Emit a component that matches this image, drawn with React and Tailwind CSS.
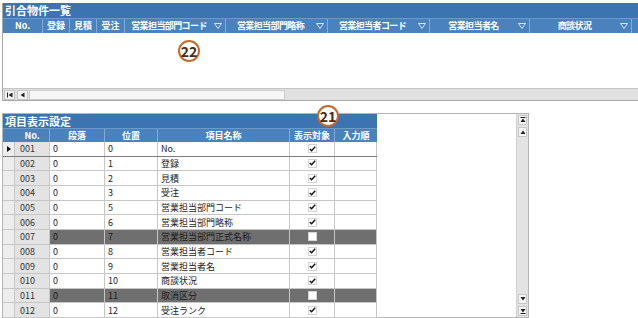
import React from "react";

const topCols = [
  { label: "No.", w: 40 },
  { label: "登録", w: 27 },
  { label: "見積", w: 27 },
  { label: "受注", w: 28 },
  { label: "営業担当部門コード", w: 101, filter: true },
  { label: "営業担当部門略称", w: 102, filter: true },
  { label: "営業担当者コード", w: 102, filter: true },
  { label: "営業担当者名", w: 100, filter: true },
  { label: "商談状況", w: 102, filter: true },
];

const rows = [
  ["001", "0", "0", "No.", true],
  ["002", "0", "1", "登録", true],
  ["003", "0", "2", "見積", true],
  ["004", "0", "3", "受注", true],
  ["005", "0", "5", "営業担当部門コード", true],
  ["006", "0", "6", "営業担当部門略称", true],
  ["007", "0", "7", "営業担当部門正式名称", false],
  ["008", "0", "8", "営業担当者コード", true],
  ["009", "0", "9", "営業担当者名", true],
  ["010", "0", "10", "商談状況", true],
  ["011", "0", "11", "取消区分", false],
  ["012", "0", "12", "受注ランク", true],
];

function FilterMark() {
  return (
    <svg width="8" height="6" viewBox="0 0 8 6" className="shrink-0">
      <path d="M0.5 0.5 H7.5 L4 5.5 Z" fill="none" stroke="#d8e4f1" strokeWidth="1" />
    </svg>
  );
}

function Check({ on }) {
  return (
    <div className="w-[9px] h-[9px] bg-white border border-[#d4d4d4] flex items-center justify-center">
      {on && (
        <svg width="7" height="6" viewBox="0 0 7 6">
          <path d="M0.8 3 L2.6 4.8 L6.2 0.8" fill="none" stroke="#111" strokeWidth="1.4" />
        </svg>
      )}
    </div>
  );
}

function Marker({ n, className }) {
  return (
    <div className={"absolute w-[22px] h-[22px] rounded-full border-2 border-[#c46a2c] bg-white flex items-center justify-center text-[14px] font-bold leading-none text-[#4a2a12] " + className}>
      {n}
    </div>
  );
}

function VBtn({ kind }) {
  return (
    <div className="h-[10px] mx-[1px] my-[1px] bg-[#f4f4f4] border border-[#c8c8c8] flex items-center justify-center">
      <svg width="6" height="6" viewBox="0 0 6 6">
        {kind === "first" && <><rect x="0.5" y="0" width="5" height="1" fill="#222" /><path d="M3 1.5 L5.5 5 H0.5 Z" fill="#222" /></>}
        {kind === "up" && <path d="M3 1.5 L5.5 5 H0.5 Z" fill="#222" />}
        {kind === "down" && <path d="M3 4.5 L5.5 1 H0.5 Z" fill="#222" />}
        {kind === "last" && <><path d="M3 4.5 L5.5 1 H0.5 Z" fill="#222" /><rect x="0.5" y="5" width="5" height="1" fill="#222" /></>}
      </svg>
    </div>
  );
}

export default function App() {
  return (
    <div className="relative w-[638px] h-[318px] bg-white overflow-hidden font-['Noto_Sans_CJK_JP','Liberation_Sans',sans-serif]">
      {/* 引合物件一覧 */}
      <div className="mt-[3px] ml-[2px] border-l border-b border-[#a8a8a8]">
        <div className="h-[15px] bg-[#3b74b0] text-white text-[11px] font-bold leading-[15px] pl-[2px]">引合物件一覧</div>
        <div className="h-[15px] bg-[#4a82bd] border-t border-[#6d9acb] flex">
          {topCols.map((c) => (
            <div key={c.label} style={{ width: c.w }} className={"shrink-0 border-r border-[#86abd3] flex items-center justify-center relative text-white text-[9px] font-bold " + (c.filter ? "pr-[12px] tracking-[-0.6px]" : "")}>
              <span>{c.label}</span>
              {c.filter && <span className="absolute right-[3px] top-[4px]"><FilterMark /></span>}
            </div>
          ))}
          <div className="flex-1" />
        </div>
        <div className="h-[55px] bg-white" />
        <div className="h-[12px] bg-[#e1e1e1] border-t border-[#c4c4c4] flex items-center pl-[1px]">
          <div className="w-[11px] h-[10px] bg-[#f4f4f4] border border-[#c4c4c4] flex items-center justify-center">
            <svg width="6" height="6" viewBox="0 0 6 6"><rect x="0" y="0.5" width="1" height="5" fill="#222" /><path d="M1.5 3 L5.5 0.5 V5.5 Z" fill="#222" /></svg>
          </div>
          <div className="w-[11px] h-[10px] ml-[2px] bg-[#f4f4f4] border border-[#c4c4c4] flex items-center justify-center">
            <svg width="5" height="6" viewBox="0 0 5 6"><path d="M0.5 3 L4.5 0.5 V5.5 Z" fill="#222" /></svg>
          </div>
          <div className="w-[256px] h-[10px] ml-[1px] bg-[#f7f7f7] border border-[#cdcdcd]" />
        </div>
      </div>

      {/* 項目表示設定 */}
      <div className="mt-[12px] ml-[2px] w-[527px] h-[205px] border border-[#b4b4b4] flex">
        <div className="flex-1">
          <div className="w-[374px]">
            <div className="h-[14px] bg-[#3b74b0] text-white text-[11px] font-bold leading-[14px] pl-[2px]">項目表示設定</div>
            <div className="h-[14px] bg-[#4a82bd] border-t border-[#6d9acb] flex text-white text-[9px] font-bold">
              <div className="w-[47px] border-r border-[#86abd3] flex items-center justify-center pl-[12px]">No.</div>
              <div className="w-[55px] border-r border-[#86abd3] flex items-center justify-center">段落</div>
              <div className="w-[53px] border-r border-[#86abd3] flex items-center justify-center">位置</div>
              <div className="w-[132px] border-r border-[#86abd3] flex items-center justify-center">項目名称</div>
              <div className="w-[45px] border-r border-[#86abd3] flex items-center justify-center">表示対象</div>
              <div className="w-[42px] flex items-center justify-center">入力順</div>
            </div>
            {rows.map(([no, dan, pos, name, on], i) => {
              const dark = !on;
              const cell = dark ? "bg-[#6f6f6f] text-[#1a1a1a]" : "bg-white text-[#222]";
              return (
                <div key={no} className={"h-[14.67px] flex text-[9px] leading-none border-b " + (i === 0 ? "border-[#7c7c7c]" : "border-[#c6c6c6]")}>
                  <div className="w-[12px] bg-[#ededed] border-r border-[#c6c6c6] flex items-center justify-center">
                    {i === 0 && <svg width="4" height="6" viewBox="0 0 4 6"><path d="M0 0 L4 3 L0 6 Z" fill="#111" /></svg>}
                  </div>
                  <div className="w-[35px] bg-[#e3e3e3] border-r border-[#c6c6c6] flex items-center pl-[5px] text-[#333]">{no}</div>
                  <div className={"w-[55px] border-r border-[#c6c6c6] flex items-center pl-[3px] " + cell}>{dan}</div>
                  <div className={"w-[53px] border-r border-[#c6c6c6] flex items-center pl-[3px] " + cell}>{pos}</div>
                  <div className={"w-[132px] border-r border-[#c6c6c6] flex items-center pl-[3px] " + cell}>{name}</div>
                  <div className={"w-[45px] border-r border-[#c6c6c6] flex items-center justify-center " + cell}>
                    <Check on={on} />
                  </div>
                  <div className={"w-[42px] border-r border-[#c6c6c6] " + cell} />
                </div>
              );
            })}
          </div>
        </div>
        <div className="w-[12px] bg-[#e3e3e3] border-l border-[#d0d0d0] flex flex-col">
          <VBtn kind="first" />
          <VBtn kind="up" />
          <div className="flex-1" />
          <VBtn kind="down" />
          <VBtn kind="last" />
        </div>
      </div>

      <Marker n="22" className="left-[178px] top-[40px]" />
      <Marker n="21" className="left-[317px] top-[105px]" />
    </div>
  );
}
